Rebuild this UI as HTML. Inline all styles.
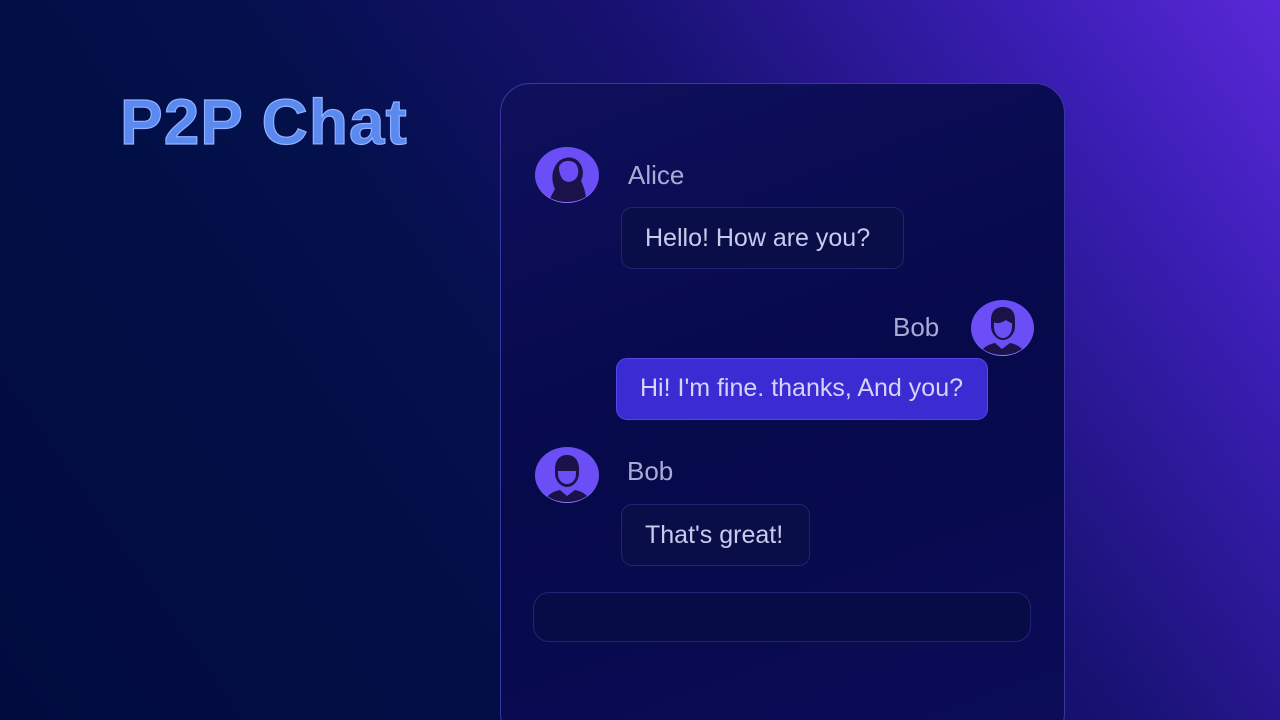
<!DOCTYPE html>
<html style="width:1280px;height:720px;overflow:hidden"><head><meta charset="utf-8"><style>
*{margin:0;padding:0;box-sizing:border-box}
body{width:1280px;height:720px;overflow:hidden;position:relative;font-family:"Liberation Sans",sans-serif;
background:linear-gradient(55deg,#010b3e 0%,#03104a 40%,#171170 62%,#3a1eb4 85%,#5a28d8 100%);}
.title{position:absolute;left:120px;top:85px;font-size:64px;font-weight:bold;color:#5a8af0;-webkit-text-stroke:1.2px #8fb0ff;letter-spacing:1px}
.panel{position:absolute;left:500px;top:83px;width:565px;height:660px;border-radius:30px;background:linear-gradient(160deg,#0f0f5c,#06094a 50%,#0c0c58);border:1px solid #3a38a0}
.av{position:absolute;width:64px;height:56px;border-radius:50%;background:#6b4ef6;overflow:hidden;border-bottom:1px solid #8a7cff}
.name{position:absolute;font-size:26px;color:#a8abd4}
.bub{position:absolute;height:62px;border-radius:11px;background:#0a0e48;border:1px solid #1f2574;color:#c9cbec;font-size:25px;line-height:60px;padding-left:23px}
</style></head><body>
<div class="title">P2P Chat</div>
<div class="panel"></div>
<div class="av" style="left:535px;top:147px"><svg width="64" height="56" viewBox="0 0 64 56"><path d="M14 56c2-8 4-10 6-14-4-8-4-20 4-28 8-6 18-4 22 4 3 6 2 12 0 16 2 4 4 8 6 22z" fill="#1a1248"/><path d="M24 20c2-6 10-8 16-4 4 4 4 10 2 14-2 4-8 6-12 4-4-2-6-8-6-14z" fill="#6b4ef6"/></svg></div>
<div class="name" style="left:628px;top:160px">Alice</div>
<div class="bub" style="left:621px;top:207px;width:283px">Hello! How are you?</div>
<div class="name" style="left:893px;top:312px">Bob</div>
<div class="av" style="left:971px;top:300px;width:63px"><svg width="63" height="56" viewBox="0 0 63 56"><path d="M8 56c2-8 10-12 16-13l7 6 8-6c6 1 14 5 16 13z" fill="#1a1248"/><path d="M20 20c0-10 6-13 12-13s12 3 12 13v6c0 8-6 14-12 14s-12-6-12-14z" fill="#1a1248"/><path d="M23 22c2 2 8 1 12-2 3 2 5 3 6 3v4c0 6-4 11-9 11s-9-5-9-11z" fill="#6b4ef6"/></svg></div>
<div class="bub" style="left:616px;top:358px;width:372px;background:#3a2bd2;border-color:#5248ea;color:#d6d4fa;line-height:59px;font-size:25px">Hi! I'm fine. thanks, And you?</div>
<div class="av" style="left:535px;top:447px"><svg width="64" height="56" viewBox="0 0 64 56"><path d="M9 56c2-8 10-12 16-13l7 6 8-6c6 1 14 5 16 13z" fill="#1a1248"/><path d="M20 22c0-10 6-14 12-14s12 4 12 14v4c0 8-6 14-12 14s-12-6-12-14z" fill="#1a1248"/><path d="M23 24h18v3c0 6-4 10-9 10s-9-4-9-10z" fill="#6b4ef6"/></svg></div>
<div class="name" style="left:627px;top:456px">Bob</div>
<div class="bub" style="left:621px;top:504px;width:189px">That's great!</div>
<div style="position:absolute;left:533px;top:592px;width:498px;height:50px;border-radius:16px;background:#070b46;border:1px solid #1f2574"></div>
</body></html>
